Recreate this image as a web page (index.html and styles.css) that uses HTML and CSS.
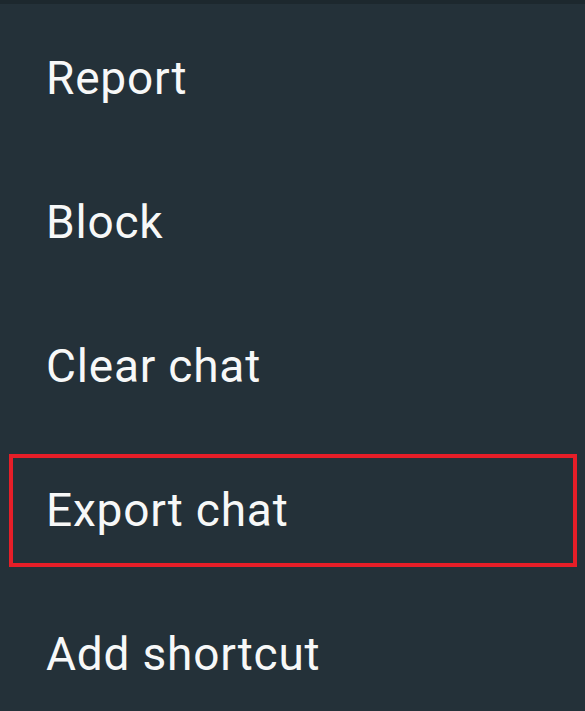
FILE: index.html
```html
<!DOCTYPE html>
<html>
<head>
<meta charset="utf-8">
<link rel="stylesheet" href="styles.css">
</head>
<body>
<div class="topbar"></div>
<ul class="menu">
  <li class="item">Report</li>
  <li class="item">Block</li>
  <li class="item">Clear chat</li>
  <li class="item item-highlight">Export chat</li>
  <li class="item">Add shortcut</li>
</ul>
</body>
</html>
```
FILE: styles.css
```css
html, body {
  margin: 0;
  padding: 0;
  background: #243139;
  width: 585px;
  height: 711px;
  overflow: hidden;
}
.topbar {
  height: 4px;
  background: #1d282e;
}
.menu {
  list-style: none;
  margin: 0;
  padding: 2px 0 0 0;
}
.item {
  position: relative;
  height: 144px;
  line-height: 144px;
  padding-left: 46px;
  font-family: Roboto, "Noto Sans", sans-serif;
  font-size: 46px;
  letter-spacing: 0.8px;
  color: #f7f8f8;
  white-space: nowrap;
}
.item-highlight::after {
  content: "";
  position: absolute;
  left: 9px;
  top: 16px;
  width: 560px;
  height: 105px;
  border: 4px solid #e61e28;
}
```
